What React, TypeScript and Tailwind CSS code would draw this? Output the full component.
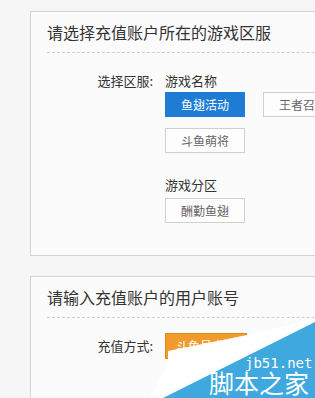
import React from "react";

const font = { fontFamily: '"Noto Sans CJK SC", "Noto Sans", sans-serif' };

function GrayBtn({ children }: { children: React.ReactNode }) {
  return (
    <div className="w-[80px] h-[25px] shrink-0 border border-[#cfcfcf] bg-[#fdfdfd] text-[#666] text-[12px] flex items-center justify-center">
      {children}
    </div>
  );
}

export default function App() {
  return (
    <div
      className="relative w-[315px] h-[398px] overflow-hidden bg-[#f6f6f6] pl-[30px] pt-[11px]"
      style={font}
    >
      {/* Card 1 */}
      <div className="w-[600px] h-[245px] border border-[#d4d4d4] bg-[#fbfbfb]">
        <div className="ml-[16px] h-[41px] border-b border-dashed border-[#cfcfcf] flex items-center text-[16px] text-[#333]">
          请选择充值账户所在的游戏区服
        </div>
        <div className="flex pt-[18px]">
          <div className="w-[134px] pr-[12px] text-right text-[13px] leading-[20px] text-[#333]">
            选择区服:
          </div>
          <div className="flex flex-col">
            <div className="text-[13px] leading-[20px] text-[#333]">游戏名称</div>
            <div className="mt-[1px] flex gap-[18px]">
              <div className="w-[80px] h-[25px] shrink-0 bg-[#1d7cd3] text-white text-[12px] flex items-center justify-center">
                鱼翅活动
              </div>
              <GrayBtn>王者召唤</GrayBtn>
            </div>
            <div className="mt-[11px]">
              <GrayBtn>斗鱼萌将</GrayBtn>
            </div>
            <div className="mt-[22px] text-[13px] leading-[20px] text-[#333]">游戏分区</div>
            <div className="mt-[3px]">
              <GrayBtn>酬勤鱼翅</GrayBtn>
            </div>
          </div>
        </div>
      </div>

      {/* Card 2 */}
      <div className="mt-[20px] w-[600px] h-[200px] border border-[#d4d4d4] bg-[#fbfbfb]">
        <div className="ml-[16px] h-[41px] border-b border-dashed border-[#cfcfcf] flex items-center text-[16px] text-[#333]">
          请输入充值账户的用户账号
        </div>
        <div className="flex items-center pt-[15px]">
          <div className="w-[134px] pr-[12px] text-right text-[13px] leading-[20px] text-[#333]">
            充值方式:
          </div>
          <div className="w-[82px] h-[26px] bg-[#f19b2c] border border-[#e0881a] text-white text-[12px] flex items-center justify-center">
            斗鱼号充值
          </div>
        </div>
      </div>

      {/* Watermark overlay */}
      <svg
        className="absolute left-0 top-0 pointer-events-none"
        width={315}
        height={398}
        viewBox="0 0 315 398"
      >
        <polygon points="150,398 168,362 168,351 247,335 315,319 315,398" fill="#ffffff" />
        <polygon points="163,398 315,322 315,398" fill="#3ea8df" />
        <text
          x={245}
          y={368}
          fill="#ffffff"
          fontSize={14}
          fontFamily='"DejaVu Sans Mono", monospace'
        >
          jb51.net
        </text>
        <text
          x={209}
          y={393}
          fill="#ffffff"
          fontSize={25}
          fontFamily='"Noto Sans CJK SC", sans-serif'
        >
          脚本之家
        </text>
      </svg>
    </div>
  );
}
